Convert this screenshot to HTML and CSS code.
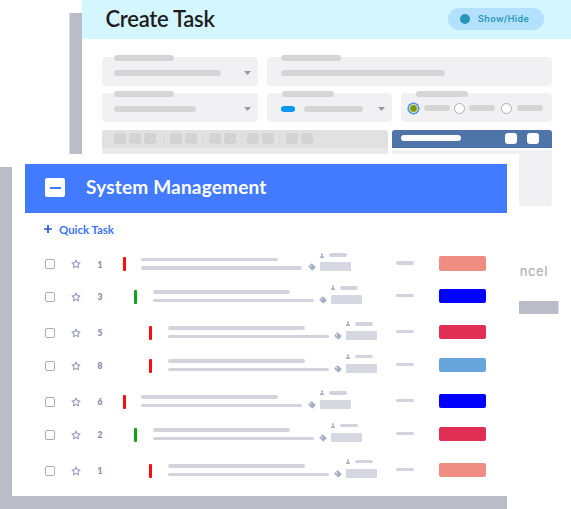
FILE: index.html
```html
<!DOCTYPE html>
<html lang="en">
<head>
<meta charset="utf-8">
<title>Tasks</title>
<link rel="stylesheet" href="styles.css">
</head>
<body>
<svg class="sprite" width="0" height="0" aria-hidden="true">
  <symbol id="star" viewBox="0 0 24 24"><path d="M12 2.5l2.9 6.2 6.8.8-5 4.7 1.3 6.8-6-3.4-6 3.4 1.3-6.8-5-4.7 6.8-.8z" fill="none" stroke="currentColor" stroke-width="2.5" stroke-linejoin="round"/></symbol>
  <symbol id="person" viewBox="0 0 10 12"><circle cx="5" cy="2.8" r="2.6"/><path d="M3.7 5h2.6v2.3L10 9v3H0V9l3.7-1.7z"/></symbol>
  <symbol id="tag" viewBox="0 0 16 16"><path fill-rule="evenodd" d="M1 6.500L6.300 1.200Q7 .5 8 1l7 6.500q.8.8 0 1.600L9.600 14.700q-.8.8-1.600 0L1.300 8.300Q.5 7.400 1 6.500zM5.200 4.700a1.300 1.300 0 1 0 .1 0z"/></symbol>
</svg>
<main class="stage">
  <section class="create">
    <header class="create-head">
      <h1 class="create-title">Create Task</h1>
      <div class="toggle"><span class="toggle-dot"></span><span class="toggle-text">Show/Hide</span></div>
    </header>
    <div class="form">
      <div class="fields fields-top">
        <div class="field"><i class="label"></i><div class="value"><i class="bar w107"></i><i class="caret"></i></div></div>
        <div class="field field-wide"><i class="label"></i><div class="value"><i class="bar w164"></i></div></div>
      </div>
      <div class="fields fields-bottom">
        <div class="field"><i class="label"></i><div class="value"><i class="bar w82"></i><i class="caret"></i></div></div>
        <div class="field field-wide"><i class="label"></i><div class="value"><i class="bar chip"></i><i class="bar w59"></i><i class="caret"></i></div></div>
        <div class="field field-radio"><i class="label"></i><div class="radios">
          <i class="radio on"></i><i class="bar w26"></i><i class="radio"></i><i class="bar w26"></i><i class="radio"></i><i class="bar w26"></i>
        </div></div>
      </div>
      <div class="panels">
        <div class="editor">
          <div class="tools">
            <div class="group"><i></i><i></i><i></i></div>
            <div class="group"><i></i><i></i></div>
            <div class="group"><i></i><i></i></div>
            <div class="group"><i></i><i></i></div>
            <div class="group"><i></i><i></i></div>
          </div>
          <div class="editor-body"></div>
        </div>
        <div class="side">
          <div class="side-head"><i class="side-title"></i><i class="side-btn"></i><i class="side-btn"></i></div>
          <div class="side-body"></div>
        </div>
      </div>
    </div>
    <footer class="create-foot">ncel</footer>
  </section>
  <section class="manage">
    <header class="manage-head">
      <span class="collapse"><i></i></span>
      <h2 class="manage-title">System Management</h2>
    </header>
    <div class="quick"><svg class="plus" viewBox="0 0 8 8"><path d="M4 0v8M0 4h8" stroke="currentColor" stroke-width="1.700"/></svg><span>Quick Task</span></div>
    <div class="rows" id="rows"></div>
  </section>
</main>
<script src="app.js"></script>
</body>
</html>
```
FILE: styles.css
```css
* { box-sizing: border-box; }
body { margin: 0; background: #fff; font-family: Lato, "Liberation Sans", sans-serif; overflow: hidden; }
i { display: block; flex: none; }
.sprite { position: absolute; }
.stage { position: relative; width: 571px; height: 509px; overflow: hidden; }

.create { margin-left: 81.500px; width: 489.500px; height: 301px; background: #fff; box-shadow: -12.500px 13px 0 #babdc8; }
.create-head { display: flex; align-items: center; justify-content: space-between; height: 39px; padding: 0 27.500px 0 24px; background: #d4f6ff; }
.create-title { margin: 0 0 2px; font-size: 22px; line-height: 26px; font-weight: 600; letter-spacing: -.27px; color: #1d1d1d; }
.toggle { display: flex; align-items: center; width: 96px; height: 22px; margin-bottom: 1px; padding-left: 12px; border-radius: 11px; background: #b3e1fd; }
.toggle-dot { width: 10px; height: 10px; border-radius: 50%; background: #2896bb; }
.toggle-text { margin-left: 8.500px; font: 600 9px/12px Inter, sans-serif; letter-spacing: .4px; color: #2896bb; }

.form { padding: 18px 19px 0 20px; }
.fields { display: grid; column-gap: 9px; height: 29px; }
.fields-top { grid-template-columns: 156.500px 1fr; }
.fields-bottom { grid-template-columns: 156.500px 125px 1fr; margin-top: 7px; }
.field { padding: 0 7px 0 12px; border-radius: 4px; background: #f1f1f3; }
.field-wide { padding-left: 14px; }
.label { width: 60px; height: 6px; margin-top: -2px; border-radius: 3px; background: #d5d5d5; }
.fields-bottom .field-wide .label { margin-left: .5px; width: 52px; }
.value { display: flex; align-items: center; height: 6px; margin-top: 9px; }
.bar { height: 6px; border-radius: 3px; background: #d5d5d5; }
.w107 { width: 107px; }
.w164 { width: 164px; }
.w82 { width: 82px; }
.w59 { width: 59px; margin-left: 9px; }
.w26 { width: 26px; }
.chip { width: 14px; background: #0c97f2; }
.caret { margin-left: auto; width: 7px; height: 4px; background: #9a9a9a; clip-path: polygon(0 0, 100% 0, 50% 100%); }
.field-radio { padding: 0 9px 0 7px; }
.field-radio .label { width: 52px; margin-left: 8px; }
.radios { display: grid; grid-template-columns: 16px 29.500px 15.500px 31.500px 16px 26px; align-items: center; height: 12px; margin-top: 5px; }
.radio { width: 11px; height: 11px; border: 1px solid #b0b0b0; border-radius: 50%; background: #fff; }
.radio.on { border-color: #277df0; box-shadow: 0 0 0 .5px #277df0; background: radial-gradient(circle, #80951b 0 2.800px, #c7cc54 3.600px, #e8efaf 4.200px); }

.panels { display: grid; grid-template-columns: 286px 160px; column-gap: 4.500px; margin-top: 8px; height: 76px; }
.tools { display: flex; align-items: center; height: 17.500px; padding-left: 12px; border-radius: 3px 3px 0 0; background: #e1e1e1; }
.group { display: flex; gap: 3px; padding-right: 7px; margin-right: 6.500px; border-right: 1px solid #dadada; }
.group:nth-child(n+2) { padding-right: 5px; margin-right: 5.500px; }
.group:last-child { border: 0; }
.group i { width: 12px; height: 11px; border-radius: 3px; background: #d3d3d3; }
.editor-body { height: 58px; background: #eaeaea; }
.side-head { display: flex; align-items: center; height: 17.500px; padding: 0 13px 0 9px; border-radius: 3px 3px 0 0; background: #4f75a8; border-bottom: 1px solid #426da5; }
.side-title { width: 60px; height: 6px; margin-right: auto; border-radius: 3px; background: #fff; }
.side-btn { width: 12px; height: 11px; margin-left: 10px; border-radius: 3px; background: #fff; }
.side-body { height: 56px; margin-top: 2.500px; border-radius: 0 0 3px 3px; background: #f1f1f3; }
.create-foot { padding: 57px 23px 0 0; text-align: right; font: 500 13px/16px Inter, sans-serif; letter-spacing: .5px; color: #b4b4b4; }

.manage { position: absolute; left: 12px; top: 154px; width: 507px; height: 342px; padding: 10px 12px 0 13px; background: #fff; box-shadow: -12px 13px 0 #babdc8; }
.manage-head { display: flex; align-items: center; height: 49px; padding-left: 20px; background: #427bff; }
.collapse { display: grid; place-items: center; width: 20px; height: 19px; margin-top: -2px; border-radius: 2px; background: #fff; }
.collapse i { width: 11px; height: 2px; background: #427bff; }
.manage-title { margin: -3px 0 0 21px; font-size: 19px; line-height: 24px; font-weight: 700; letter-spacing: .2px; color: #fff; }
.quick { display: flex; align-items: center; height: 16px; margin: 8px 0 0 19px; font-size: 11.500px; font-weight: 700; letter-spacing: -.05px; color: #3d75f5; }
.plus { width: 8px; height: 8px; margin-right: 7px; color: #2c55dc; }
.rows { display: grid; grid-template-rows: 32.800px 36.100px 32.800px 36.100px 32.800px 36.100px 32.800px; margin-top: 15px; padding-left: 20px; }
.row { display: grid; grid-template-columns: 26px 19px 32.500px 273.500px 43.300px 47px; align-items: start; }
.row > * { margin-top: 7.200px; }
.check { width: 10px; height: 10px; border: 1px solid #a9aec5; border-radius: 2px; }
.row .star { width: 10px; height: 10px; color: #949bbb; }
.row .num { padding-right: 12.500px; margin-top: 7.500px; text-align: center; font-size: 8.500px; line-height: 10px; font-weight: 800; color: #8c92ad; }
.task { display: flex; }
.row .task { margin-top: 2px; }
.stripe { width: 3px; height: 14px; margin-top: 3px; border-radius: 1px; }
.lines { width: 161px; margin: 3.500px 0 0 15.500px; }
.line { height: 3.500px; border-radius: 2px; background: #d2d4dd; }
.line.a { width: 137px; }
.line.b { width: 161px; margin-top: 5px; }
.tag { width: 8px; height: 8px; margin: 9px 4px 0 5.500px; fill: #a7afc4; }
.meta { margin-top: -2px; }
.who { display: flex; align-items: center; height: 6px; }
.person { width: 4px; height: 5px; margin-right: 5px; fill: #a7afc4; }
.who .line { width: 18px; }
.box { width: 31px; height: 9px; margin-top: 4px; border-radius: 1px; background: #d5d8e1; }
.row .dash { width: 18px; height: 3.500px; margin-top: 9px; border-radius: 2px; background: #d2d4dd; }
.row .status { height: 14.500px; margin-top: 4px; border-radius: 2px; }
.indent-0 { padding-left: 0; }
.indent-1 { padding-left: 11.500px; }
.indent-2 { padding-left: 26.700px; }
.red { background: #fb0d0d; }
.green { background: #09a615; }
.salmon { background: #f08d82; }
.blue { background: #0000fe; }
.crimson { background: #e02e54; }
.sky { background: #69a5dd; }
```
FILE: app.js
```javascript
const tasks = [
  [1, 0, 'red', 'salmon'],
  [3, 1, 'green', 'blue'],
  [5, 2, 'red', 'crimson'],
  [8, 2, 'red', 'sky'],
  [6, 0, 'red', 'blue'],
  [2, 1, 'green', 'crimson'],
  [1, 2, 'red', 'salmon'],
];
document.getElementById('rows').innerHTML = tasks.map(([num, indent, mark, status]) => `
  <div class="row">
    <i class="check"></i>
    <svg class="star"><use href="#star"/></svg>
    <span class="num">${num}</span>
    <div class="task indent-${indent}">
      <i class="stripe ${mark}"></i>
      <div class="lines"><i class="line a"></i><i class="line b"></i></div>
      <svg class="tag"><use href="#tag"/></svg>
      <div class="meta">
        <div class="who"><svg class="person"><use href="#person"/></svg><i class="line"></i></div>
        <i class="box"></i>
      </div>
    </div>
    <i class="dash"></i>
    <i class="status ${status}"></i>
  </div>`).join('');
```
